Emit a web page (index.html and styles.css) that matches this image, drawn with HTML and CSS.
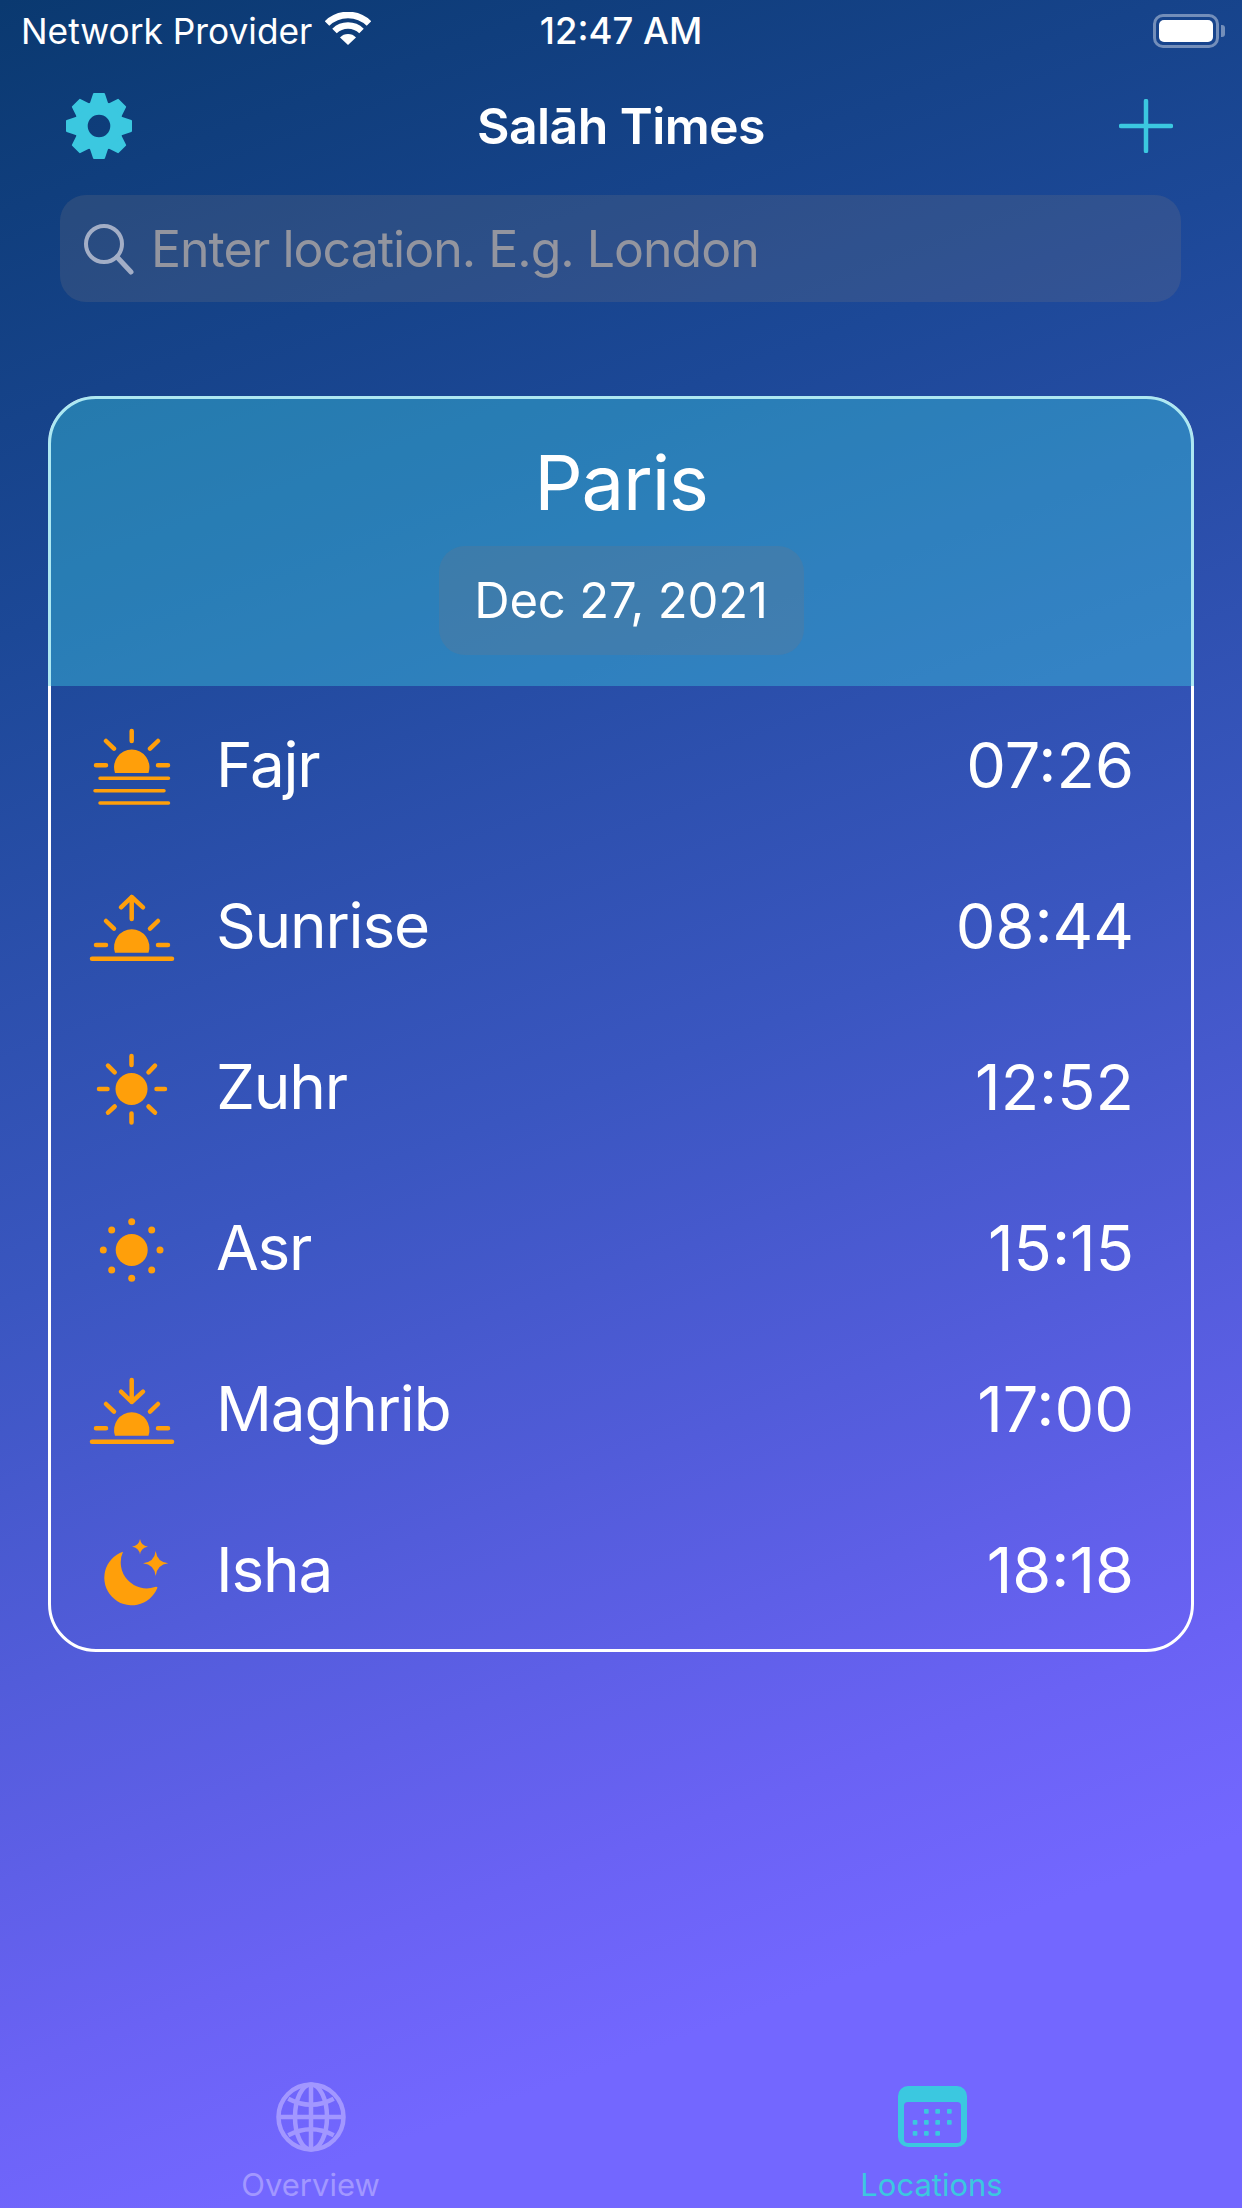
FILE: index.html
```html
<!DOCTYPE html>
<html lang="en">
<head>
    <meta charset="UTF-8">
    <meta name="viewport" content="width=device-width, initial-scale=1.0">
    <title>Salah Times</title>
    <link rel="stylesheet" href="styles.css">
</head>
<body>
<div class="page">

    <!-- Status bar -->
    <div class="status-bar">
        <div class="carrier">
            <span>Network Provider</span>
            <svg class="wifi" width="46" height="34" viewBox="0 0 46 34">
                <path d="M2 11.500a30 30 0 0 1 42 0" fill="none" stroke="#fff" stroke-width="6.500"/>
                <path d="M9.500 19a19.500 19.500 0 0 1 27 0" fill="none" stroke="#fff" stroke-width="6.500"/>
                <path d="M15 25.500a11 11 0 0 1 16 0L23 33z" fill="#fff"/>
            </svg>
        </div>
        <div class="clock">12:47 AM</div>
        <div class="battery-wrap">
            <div class="battery"><div class="battery-fill"></div></div>
            <div class="battery-nub"></div>
        </div>
    </div>

    <!-- Nav -->
    <div class="nav">
        <svg class="gear" width="68" height="68" viewBox="-34 -34 68 68">
            <defs>
                <path id="tooth" d="M-8 -23L-5 -32H5L8 -23z" fill="#3bc8e0" stroke="#3bc8e0" stroke-width="2" stroke-linejoin="round"/>
            </defs>
            <circle r="18" fill="none" stroke="#3bc8e0" stroke-width="13.400"/>
            <use href="#tooth"/>
            <use href="#tooth" transform="rotate(45)"/>
            <use href="#tooth" transform="rotate(90)"/>
            <use href="#tooth" transform="rotate(135)"/>
            <use href="#tooth" transform="rotate(180)"/>
            <use href="#tooth" transform="rotate(225)"/>
            <use href="#tooth" transform="rotate(270)"/>
            <use href="#tooth" transform="rotate(315)"/>
        </svg>
        <h1 class="title">Salāh Times</h1>
        <svg class="plus" width="54" height="54" viewBox="0 0 54 54">
            <path d="M27 2V52M2 27H52" stroke="#3bc8e0" stroke-width="4.500" stroke-linecap="round"/>
        </svg>
    </div>

    <!-- Search -->
    <div class="search">
        <svg width="52" height="52" viewBox="0 0 52 52">
            <circle cx="21" cy="21" r="18" fill="none" stroke="#a3aec6" stroke-width="4"/>
            <path d="M34 34L48 49" stroke="#a3aec6" stroke-width="5" stroke-linecap="round"/>
        </svg>
        <span class="placeholder">Enter location. E.g. London</span>
    </div>

    <!-- Prayer card -->
    <section class="card">
        <div class="card-head">
            <div class="city">Paris</div>
            <div class="date">Dec 27, 2021</div>
        </div>

        <div class="row">
            <svg class="row-icon" viewBox="0 0 90 80">
                <g class="rays">
                    <path d="M44.700 6V16M19 16L27 23.700M71 16L63 23.700M9 40.300H19M71 40.300H81"/>
                </g>
                <path class="sun" d="M28 48A17.700 17.700 0 1 1 61.500 48z"/>
                <path class="lines" d="M13 53.300H81.500M8 65.700H77M13 78H81.500"/>
            </svg>
            <span class="name">Fajr</span>
            <span class="time">07:26</span>
        </div>

        <div class="row">
            <svg class="row-icon" viewBox="0 0 90 80">
                <g class="rays">
                    <path d="M44.700 33V11M34 21.300L44.700 11L56 21.300M19 35L27 42.700M71 35L63 42.700M9 59H19M71 59H81"/>
                </g>
                <path class="sun" d="M28 66.700A17.700 17.700 0 1 1 61.500 66.700z"/>
                <path class="lines thick" d="M5 72.700H85"/>
            </svg>
            <span class="name">Sunrise</span>
            <span class="time">08:44</span>
        </div>

        <div class="row">
            <svg class="row-icon" viewBox="0 0 90 80">
                <g class="rays">
                    <path d="M44.500 9V18M44.500 66.500V75.500M12 42H20.500M69.500 42H78M21 18.700L27.700 25.300M68 18.700L61.500 25.300M21 65.700L27.700 59.500M68 65.700L61.500 59.500"/>
                </g>
                <circle class="sun" cx="44.500" cy="42" r="16"/>
            </svg>
            <span class="name">Zuhr</span>
            <span class="time">12:52</span>
        </div>

        <div class="row">
            <svg class="row-icon" viewBox="0 0 90 80">
                <circle class="sun" cx="44.700" cy="42" r="16"/>
                <g class="sun">
                    <circle cx="44.700" cy="13.700" r="3.500"/>
                    <circle cx="44.700" cy="70.300" r="3.500"/>
                    <circle cx="16.300" cy="42" r="3.500"/>
                    <circle cx="73" cy="42" r="3.500"/>
                    <circle cx="24.700" cy="22" r="3.500"/>
                    <circle cx="64.700" cy="22" r="3.500"/>
                    <circle cx="24.700" cy="62" r="3.500"/>
                    <circle cx="64.700" cy="62" r="3.500"/>
                </g>
            </svg>
            <span class="name">Asr</span>
            <span class="time">15:15</span>
        </div>

        <div class="row">
            <svg class="row-icon" viewBox="0 0 90 80">
                <g class="rays">
                    <path d="M44.700 11V33M34 22.700L44.700 33L56 22.700M19 35L27 42.700M71 35L63 42.700M9 59.300H19M71 59.300H81"/>
                </g>
                <path class="sun" d="M28 66.700A17.700 17.700 0 1 1 61.500 66.700z"/>
                <path class="lines thick" d="M5 72.700H85"/>
            </svg>
            <span class="name">Maghrib</span>
            <span class="time">17:00</span>
        </div>

        <div class="row">
            <svg class="row-icon" viewBox="0 0 90 80">
                <path class="sun" d="M36 21.700A27.500 27.500 0 1 0 70.500 57.500Q70 56.500 68 57A26 26 0 0 1 36 21.700z"/>
                <path class="sun" d="M68.700 21Q70 32 81.200 33.300Q70 34.600 68.700 46Q67.400 34.600 56 33.300Q67.400 32 68.700 21z"/>
                <path class="sun" d="M53 9Q54 15.700 61 16.700Q54 17.700 53 24.500Q52 17.700 45 16.700Q52 15.700 53 9z"/>
            </svg>
            <span class="name">Isha</span>
            <span class="time">18:18</span>
        </div>
    </section>

    <!-- Tab bar -->
    <nav class="tabs">
        <div class="tab">
            <svg width="72" height="72" viewBox="0 0 72 72" fill="none" stroke="#a297ff" stroke-width="4.500">
                <circle cx="36" cy="36" r="32.500"/>
                <ellipse cx="36" cy="36" rx="16" ry="32.500"/>
                <path d="M36 3V69M3 36H69"/>
                <path d="M13.300 17.700Q36 29.700 58.700 17.700M13.300 54.300Q36 42.300 58.700 54.300"/>
            </svg>
            <span class="tab-label">Overview</span>
        </div>
        <div class="tab active">
            <svg width="72" height="72" viewBox="0 0 72 72">
                <rect x="2" y="5" width="69" height="61" rx="10" fill="#3bc8e0"/>
                <rect x="8" y="21" width="57" height="41" rx="4" fill="#7367ff"/>
                <g fill="#3bc8e0">
                    <rect x="28" y="28" width="4.700" height="4.700" rx="1"/><rect x="39.300" y="28" width="4.700" height="4.700" rx="1"/><rect x="51" y="28" width="4.700" height="4.700" rx="1"/>
                    <rect x="16.700" y="39" width="4.700" height="4.700" rx="1"/><rect x="28" y="39" width="4.700" height="4.700" rx="1"/><rect x="39.300" y="39" width="4.700" height="4.700" rx="1"/><rect x="51" y="39" width="4.700" height="4.700" rx="1"/>
                    <rect x="16.700" y="50" width="4.700" height="4.700" rx="1"/><rect x="28" y="50" width="4.700" height="4.700" rx="1"/><rect x="39.300" y="50" width="4.700" height="4.700" rx="1"/>
                </g>
            </svg>
            <span class="tab-label">Locations</span>
        </div>
    </nav>

</div>
</body>
</html>
```

FILE: styles.css
```css
* {
    box-sizing: border-box;
}
body {
    margin: 0;
    font-family: Inter, "Liberation Sans", sans-serif;
    color: #fff;
}
.page {
    width: 1242px;
    height: 2208px;
    overflow: hidden;
    display: flex;
    flex-direction: column;
    background: linear-gradient(160deg, #0a3970 0%, #1c4897 24%, #3a56c0 49%, #6a62f4 78%, #7367ff 86%);
}

/* status bar */
.status-bar {
    height: 62px;
    padding: 0 17px;
    display: grid;
    grid-template-columns: 1fr auto 1fr;
    align-items: center;
    font-size: 35.300px;
}
.carrier {
    margin-left: 4px;
    display: flex;
    align-items: center;
    gap: 13px;
}
.wifi {
    margin-top: -4px;
}
.clock {
    font-size: 36.500px;
    font-weight: 500;
}
.battery-wrap {
    display: flex;
    align-items: center;
    justify-content: flex-end;
    gap: 2px;
}
.battery {
    width: 66px;
    height: 34px;
    padding: 3px;
    border: 3px solid rgba(255, 255, 255, 0.4);
    border-radius: 10px;
}
.battery-fill {
    height: 100%;
    background: #fff;
    border-radius: 5px;
}
.battery-nub {
    width: 4px;
    height: 12px;
    background: rgba(255, 255, 255, 0.4);
    border-radius: 0 3px 3px 0;
}

/* nav */
.nav {
    height: 128px;
    padding: 0 65px;
    display: grid;
    grid-template-columns: 1fr auto 1fr;
    align-items: center;
}
.plus {
    justify-self: end;
    margin-right: 4px;
}
.title {
    margin: 0;
    font-size: 50px;
    font-weight: 600;
    letter-spacing: -0.6px;
}

/* search */
.search {
    height: 107px;
    margin: 5px 61px 0 60px;
    padding-left: 23px;
    display: flex;
    align-items: center;
    gap: 16px;
    background: rgba(118, 118, 128, 0.24);
    border-radius: 26px;
}
.placeholder {
    font-size: 50px;
    letter-spacing: -1px;
    color: #93959f;
}

/* card */
.card {
    margin: 94px 48px 0 48px;
    height: 1256px;
    border: 3px solid #fff;
    border-radius: 48px;
}
.card-head {
    height: 290px;
    margin: -3px -3px 0;
    padding-top: 40px;
    display: flex;
    flex-direction: column;
    align-items: center;
    background: rgba(59, 200, 224, 0.42);
    border-radius: 48px 48px 0 0;
}
.city {
    font-size: 76px;
    line-height: 92px;
    letter-spacing: -1.200px;
}
.date {
    width: 365px;
    height: 109px;
    margin-top: 18px;
    display: flex;
    align-items: center;
    justify-content: center;
    font-size: 49px;
    letter-spacing: -0.2px;
    background: rgba(118, 118, 128, 0.24);
    border-radius: 26px;
}
.row {
    height: 161px;
    padding: 0 57px 4px 36px;
    display: flex;
    align-items: center;
    font-size: 62px;
    letter-spacing: -1.200px;
}
.row-icon {
    width: 90px;
    height: 80px;
    margin-right: 39px;
}
.time {
    margin-left: auto;
    font-size: 63px;
    letter-spacing: 0;
}
.rays path {
    fill: none;
    stroke: #ff9f0a;
    stroke-width: 4.5;
    stroke-linecap: round;
    stroke-linejoin: round;
}
.sun {
    fill: #ff9f0a;
}
.lines {
    fill: none;
    stroke: #ff9f0a;
    stroke-width: 3.5;
    stroke-linecap: round;
}
.lines.thick {
    stroke-width: 4.5;
}

/* tabs */
.tabs {
    margin-top: auto;
    height: 130px;
    padding-top: 3px;
    display: grid;
    grid-template-columns: 1fr 1fr;
}
.tab {
    display: flex;
    flex-direction: column;
    align-items: center;
    gap: 14px;
    color: #a297ff;
}
.tab.active {
    color: #3bc8e0;
}
.tab-label {
    font-size: 31px;
    line-height: 36px;
}
```
